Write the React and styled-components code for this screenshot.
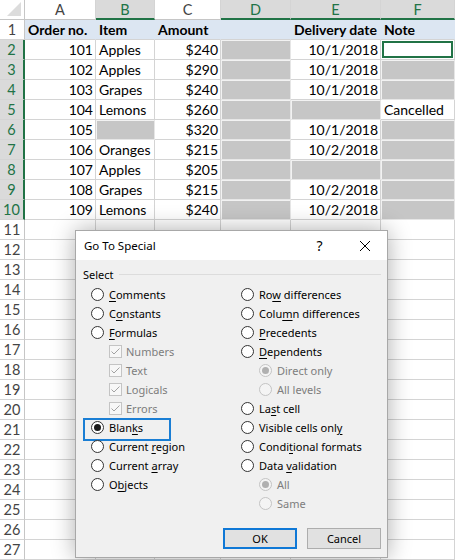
import React from 'react';
import styled, { createGlobalStyle } from 'styled-components';

const GlobalStyle = createGlobalStyle`
  html, body {
    margin: 0;
    padding: 0;
    background: #fff;
    overflow: hidden;
  }
  * { box-sizing: border-box; }
`;

const GREEN = '#217346';
const GRID = '#d4d4d4';

const columns = [
  { id: 'A', width: 71, selected: false, align: 'right' },
  { id: 'B', width: 59, selected: true, align: 'left' },
  { id: 'C', width: 66, selected: false, align: 'right' },
  { id: 'D', width: 70, selected: true, align: 'left' },
  { id: 'E', width: 90, selected: true, align: 'right' },
  { id: 'F', width: 74, selected: true, align: 'left' },
];

// null = blank (selected) cell, '@' = active cell
const rows = [
  ['Order no.', 'Item', 'Amount', '', 'Delivery date', 'Note'],
  ['101', 'Apples', '$240', null, '10/1/2018', '@'],
  ['102', 'Apples', '$290', null, '10/1/2018', null],
  ['103', 'Grapes', '$240', null, '10/1/2018', null],
  ['104', 'Lemons', '$260', null, null, 'Cancelled'],
  ['105', null, '$320', null, '10/1/2018', null],
  ['106', 'Oranges', '$215', null, '10/2/2018', null],
  ['107', 'Apples', '$205', null, null, null],
  ['108', 'Grapes', '$215', null, '10/2/2018', null],
  ['109', 'Lemons', '$240', null, '10/2/2018', null],
];

const TOTAL_ROWS = 27;

const leftOptions = [
  { label: '&Comments' },
  { label: 'C&onstants' },
  { label: '&Formulas' },
  { label: 'Numbers', kind: 'check', sub: true, disabled: true, checked: true },
  { label: 'Text', kind: 'check', sub: true, disabled: true, checked: true },
  { label: 'Logicals', kind: 'check', sub: true, disabled: true, checked: true },
  { label: 'Errors', kind: 'check', sub: true, disabled: true, checked: true },
  { label: 'Blan&ks', checked: true, focused: true },
  { label: 'Current &region' },
  { label: 'Current &array' },
  { label: 'O&bjects' },
];

const rightOptions = [
  { label: 'Ro&w differences' },
  { label: 'Colu&mn differences' },
  { label: '&Precedents' },
  { label: '&Dependents' },
  { label: 'Direct only', sub: true, disabled: true, checked: true },
  { label: 'All levels', sub: true, disabled: true },
  { label: 'La&st cell' },
  { label: 'Visible cells onl&y' },
  { label: 'Condi&tional formats' },
  { label: 'Data &validation' },
  { label: 'All', sub: true, disabled: true, checked: true },
  { label: 'Same', sub: true, disabled: true },
];

const Screen = styled.div`
  position: relative;
  width: 455px;
  height: 560px;
  overflow: hidden;
  font-family: Lato, "Liberation Sans", sans-serif;
`;

const Sheet = styled.div`
  display: grid;
  grid-template-columns: 25px ${(p) => p.$cols};
  grid-auto-rows: 20px;
`;

const Corner = styled.div`
  display: flex;
  align-items: flex-end;
  justify-content: flex-end;
  padding: 0 3px 3px 0;
  background: #fff;
  border-right: 1px solid #c6c6c6;
  border-bottom: 1px solid #c6c6c6;
`;

const ColHead = styled.div`
  display: flex;
  align-items: center;
  justify-content: center;
  font-size: 14.5px;
  color: ${(p) => (p.$selected ? GREEN : '#444')};
  background: ${(p) => (p.$selected ? '#dadada' : '#fff')};
  border-right: 1px solid ${GRID};
  border-bottom: ${(p) => (p.$selected ? `2px solid ${GREEN}` : `1px solid #c6c6c6`)};
`;

const RowHead = styled.div`
  display: flex;
  align-items: center;
  justify-content: center;
  font-size: 14.5px;
  color: ${(p) => (p.$selected ? GREEN : '#444')};
  background: ${(p) => (p.$selected ? '#dadada' : '#fff')};
  border-bottom: 1px solid ${GRID};
  border-right: ${(p) => (p.$selected ? `2px solid ${GREEN}` : `1px solid #c6c6c6`)};
`;

const Cell = styled.div`
  display: flex;
  align-items: center;
  justify-content: ${(p) => (p.$right ? 'flex-end' : 'flex-start')};
  padding: 0 2px 0 3px;
  font-size: 14px;
  font-weight: ${(p) => (p.$title ? 700 : 400)};
  color: #000;
  white-space: nowrap;
  background: ${(p) => (p.$title ? '#dce6f2' : p.$blank ? '#c6c6c6' : '#fff')};
  border-right: 1px solid ${(p) => (p.$title ? '#dce6f2' : p.$blank ? '#e6e6e6' : GRID)};
  border-bottom: 1px solid ${(p) => (p.$blank ? '#e6e6e6' : GRID)};
  box-shadow: ${(p) =>
    p.$active
      ? `inset 0 0 0 1px #fff, inset 0 0 0 3px ${GREEN}`
      : p.$blank
      ? 'inset 1px 1px 0 #f2f2f2'
      : 'none'};
`;

const Dialog = styled.div`
  position: absolute;
  left: 75px;
  top: 230px;
  width: 313px;
  height: 328px;
  display: flex;
  flex-direction: column;
  background: #f0f0f0;
  border: 1px solid #a8a8a8;
  box-shadow: 0 0 22px rgba(0, 0, 0, 0.32);
  font-family: "Noto Sans", "Open Sans", sans-serif;
  font-size: 11px;
  color: #000;
`;

const TitleBar = styled.div`
  display: flex;
  align-items: center;
  height: 29px;
  padding-left: 8px;
  background: #fff;
  font-size: 11.5px;
`;

const Title = styled.div`
  flex: 1;
`;

const TitleButton = styled.div`
  display: flex;
  align-items: center;
  justify-content: center;
  width: 45px;
  height: 100%;
  font-size: 14px;
`;

const Body = styled.div`
  flex: 1;
  display: flex;
  flex-direction: column;
  padding: 6px 6px 8px 7px;
`;

const Legend = styled.div`
  display: flex;
  align-items: center;
  height: 16px;
  &::after {
    content: '';
    flex: 1;
    margin-left: 5px;
    border-top: 1px solid #dcdcdc;
  }
`;

const Options = styled.div`
  display: grid;
  grid-template-columns: 150px 150px;
  margin-top: 3px;
  padding-left: 8px;
`;

const Column = styled.div`
  display: flex;
  flex-direction: column;
`;

const Option = styled.div`
  position: relative;
  display: flex;
  align-items: center;
  gap: ${(p) => (p.$check ? 4 : 5)}px;
  height: 19px;
  padding-left: ${(p) => (p.$sub ? 18 : 0)}px;
  color: ${(p) => (p.$disabled ? '#7d7d7d' : '#000')};
  white-space: nowrap;
  u { text-underline-offset: 2px; }
  ${(p) =>
    p.$focused &&
    `
    &::before {
      content: '';
      position: absolute;
      left: -8px;
      top: 0;
      width: 84px;
      height: 19px;
      border: 2px solid #1a7ed4;
    }
  `}
`;

const Radio = styled.span`
  display: flex;
  align-items: center;
  justify-content: center;
  width: 13px;
  height: 13px;
  flex: none;
  border-radius: 50%;
  border: 1px solid ${(p) => (p.$disabled ? '#c4c4c4' : '#333')};
  background: ${(p) => (p.$disabled ? '#f4f4f4' : '#fff')};
  &::after {
    content: '';
    display: ${(p) => (p.$checked ? 'block' : 'none')};
    width: 7px;
    height: 7px;
    border-radius: 50%;
    background: ${(p) => (p.$disabled ? '#b0b0b0' : '#1a1a1a')};
  }
`;

const Check = styled.span`
  display: flex;
  align-items: center;
  justify-content: center;
  width: 13px;
  height: 13px;
  flex: none;
  border: 1px solid #c4c4c4;
  background: #f7f7f7;
`;

const Buttons = styled.div`
  display: flex;
  justify-content: flex-end;
  gap: 10px;
  margin-top: auto;
`;

const Button = styled.div`
  display: flex;
  align-items: center;
  justify-content: center;
  width: 74px;
  height: 21px;
  background: #e1e1e1;
  border: ${(p) => (p.$default ? '2px solid #0f78d6' : '1px solid #adadad')};
`;

const Label = ({ text }) => {
  const i = text.indexOf('&');
  if (i < 0) return text;
  return (
    <>
      {text.slice(0, i)}
      <u>{text[i + 1]}</u>
      {text.slice(i + 2)}
    </>
  );
};

const OptionItem = ({ opt }) => (
  <Option $sub={opt.sub} $disabled={opt.disabled} $focused={opt.focused} $check={opt.kind === 'check'}>
    {opt.kind === 'check' ? (
      <Check>
        <svg width="11" height="11" viewBox="0 0 11 11">
          <polyline points="1.5,5.5 4,8 9.5,2.5" fill="none" stroke="#a2a2a2" strokeWidth="1" />
        </svg>
      </Check>
    ) : (
      <Radio $checked={opt.checked} $disabled={opt.disabled} />
    )}
    <span>
      <Label text={opt.label} />
    </span>
  </Option>
);

const App = () => {
  const cells = [];
  for (let r = 1; r <= TOTAL_ROWS; r++) {
    const values = rows[r - 1];
    cells.push(
      <RowHead key={`h${r}`} $selected={r >= 2 && r <= 10}>
        {r}
      </RowHead>
    );
    columns.forEach((col, c) => {
      const v = values ? values[c] : '';
      const title = r === 1;
      cells.push(
        <Cell
          key={`${col.id}${r}`}
          $title={title}
          $right={!title && col.align === 'right'}
          $blank={v === null}
          $active={v === '@'}
        >
          {v && v !== '@' ? v : ''}
        </Cell>
      );
    });
  }

  return (
    <Screen>
      <GlobalStyle />
      <Sheet $cols={columns.map((c) => `${c.width}px`).join(' ')}>
        <Corner>
          <svg width="14" height="14" viewBox="0 0 14 14">
            <polygon points="14,0 14,14 0,14" fill="#dcdcdc" />
          </svg>
        </Corner>
        {columns.map((col) => (
          <ColHead key={col.id} $selected={col.selected}>
            {col.id}
          </ColHead>
        ))}
        {cells}
      </Sheet>

      <Dialog>
        <TitleBar>
          <Title>Go To Special</Title>
          <TitleButton>?</TitleButton>
          <TitleButton>
            <svg width="10" height="10" viewBox="0 0 10 10">
              <path d="M0 0 L10 10 M10 0 L0 10" stroke="#000" strokeWidth="1" />
            </svg>
          </TitleButton>
        </TitleBar>
        <Body>
          <Legend>Select</Legend>
          <Options>
            <Column>
              {leftOptions.map((o) => (
                <OptionItem key={o.label} opt={o} />
              ))}
            </Column>
            <Column>
              {rightOptions.map((o) => (
                <OptionItem key={o.label} opt={o} />
              ))}
            </Column>
          </Options>
          <Buttons>
            <Button $default>OK</Button>
            <Button>Cancel</Button>
          </Buttons>
        </Body>
      </Dialog>
    </Screen>
  );
};

export default App;
